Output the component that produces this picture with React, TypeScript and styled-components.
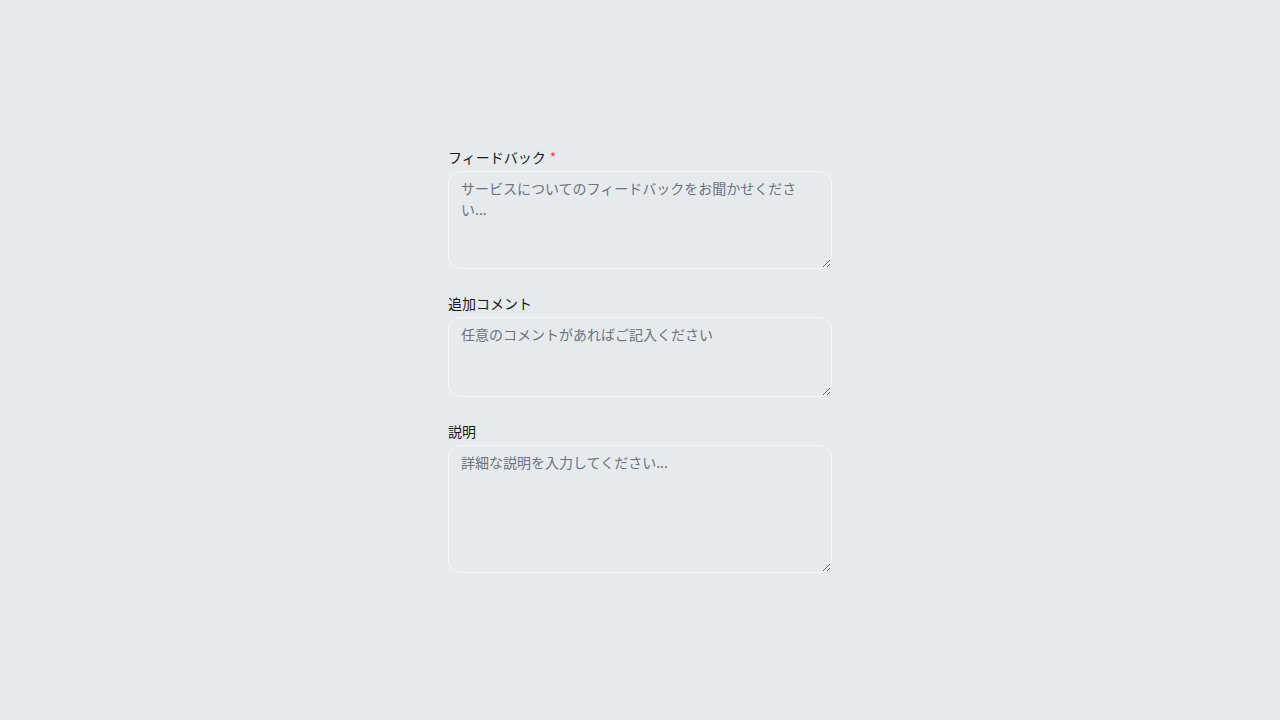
import styled, { createGlobalStyle } from "styled-components";

const GlobalStyle = createGlobalStyle`
  html, body {
    margin: 0;
    padding: 0;
    background: #e6eaed;
  }
  body {
    font-family: Inter, "Noto Sans CJK JP", "Noto Sans", sans-serif;
  }
`;

type FieldData = {
  id: string;
  label: string;
  placeholder: string;
  height: number;
  required?: boolean;
};

const fields: FieldData[] = [
  { id: "feedback", label: "フィードバック", placeholder: "サービスについてのフィードバックをお聞かせください...", height: 98, required: true },
  { id: "comment", label: "追加コメント", placeholder: "任意のコメントがあればご記入ください", height: 80 },
  { id: "description", label: "説明", placeholder: "詳細な説明を入力してください...", height: 128 },
];

export default function App(): JSX.Element {
  return <>
    <GlobalStyle />
    <Page>
      <Form>
        {fields.map(field => <Field key={field.id}>
          <Label htmlFor={field.id}>
            {field.label}
            {field.required && <Required>*</Required>}
          </Label>
          <TextArea id={field.id} placeholder={field.placeholder} $height={field.height} />
        </Field>)}
      </Form>
    </Page>
  </>;
}

const Page = styled.main`
  min-height: 100vh;
  display: flex;
  align-items: center;
  justify-content: center;
`;

const Form = styled.form`
  width: 384px;
  display: flex;
  flex-direction: column;
  gap: 25px;
`;

const Field = styled.div`
  display: flex;
  flex-direction: column;
  gap: 3px;
`;

const Label = styled.label`
  font-family: "Noto Sans CJK JP", sans-serif;
  font-size: 14px;
  line-height: 20px;
  font-weight: 400;
  color: #16191d;
  margin-top: -1px;
  margin-bottom: 1px;
`;

const Required = styled.span`
  color: #ef4444;
  margin-left: 4px;
`;

const TextArea = styled.textarea<{ $height: number }>`
  box-sizing: border-box;
  width: 100%;
  height: ${({ $height }) => $height}px;
  margin: 0;
  padding: 6px 12px;
  border: 1px solid #f4f5f7;
  border-radius: 12px;
  background: transparent;
  font-family: "Noto Sans CJK JP", sans-serif;
  font-size: 14px;
  line-height: 21px;
  color: #1f2328;
  outline: none;
  resize: vertical;

  &::placeholder {
    color: #6b7280;
  }
`;
